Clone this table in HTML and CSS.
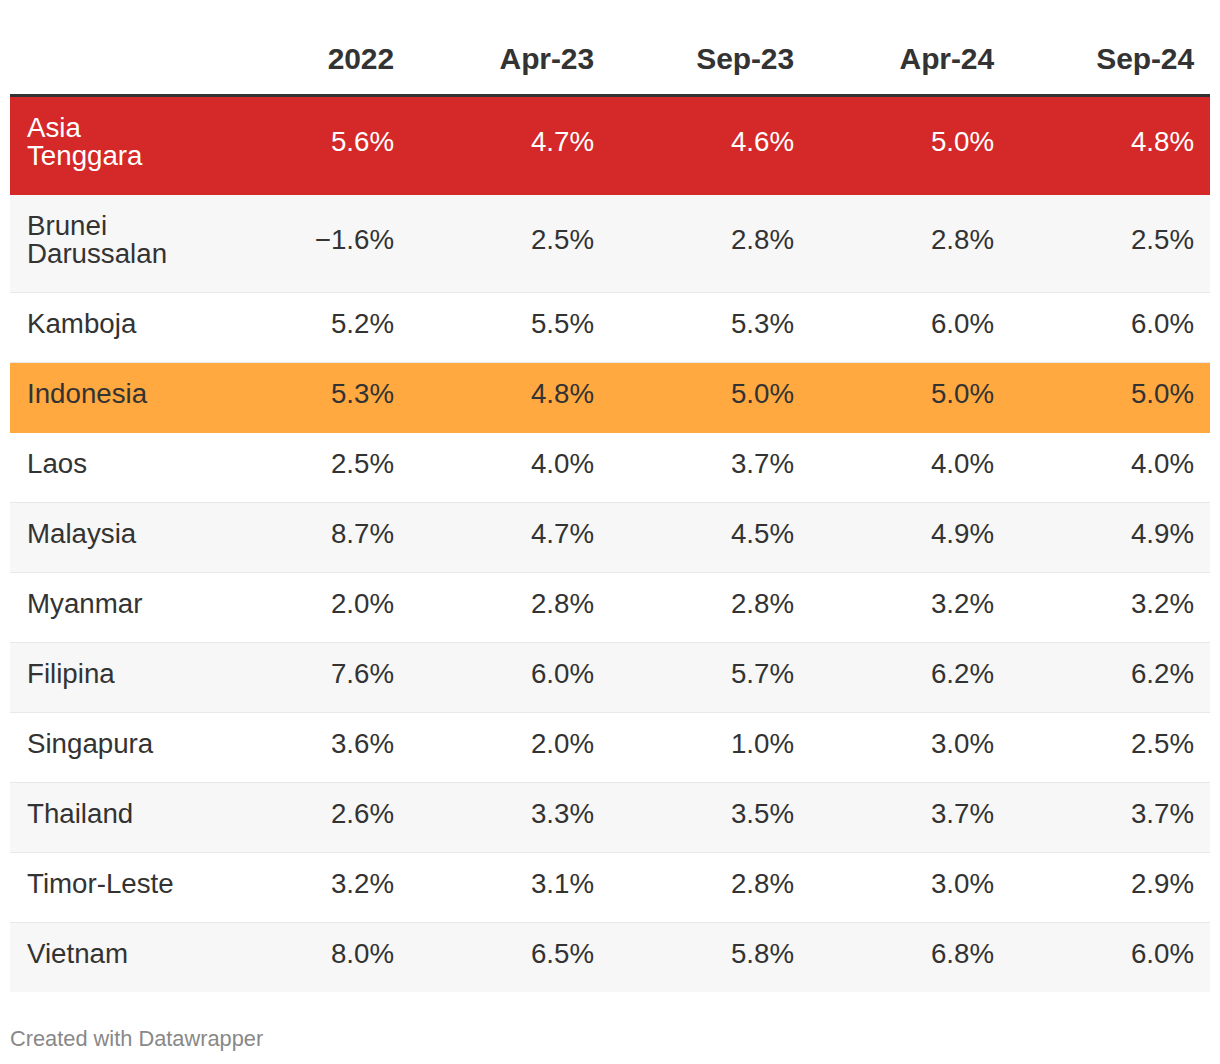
FILE: index.html
```html
<!DOCTYPE html>
<html lang="id">
<head>
<meta charset="utf-8">
<title>Pertumbuhan Ekonomi Asia Tenggara</title>
<link rel="stylesheet" href="styles.css">
</head>
<body>
<div class="chart">
  <table class="dw-table">
    <colgroup>
      <col class="col-name">
      <col class="col-num">
      <col class="col-num">
      <col class="col-num">
      <col class="col-num">
      <col class="col-num">
    </colgroup>
    <thead>
      <tr>
        <th class="name"></th>
        <th>2022</th>
        <th>Apr-23</th>
        <th>Sep-23</th>
        <th>Apr-24</th>
        <th>Sep-24</th>
      </tr>
    </thead>
    <tbody>
      <tr class="hl-red">
        <td class="name">Asia<br>Tenggara</td>
        <td>5.6%</td><td>4.7%</td><td>4.6%</td><td>5.0%</td><td>4.8%</td>
      </tr>
      <tr class="stripe">
        <td class="name">Brunei<br>Darussalan</td>
        <td>&minus;1.6%</td><td>2.5%</td><td>2.8%</td><td>2.8%</td><td>2.5%</td>
      </tr>
      <tr>
        <td class="name">Kamboja</td>
        <td>5.2%</td><td>5.5%</td><td>5.3%</td><td>6.0%</td><td>6.0%</td>
      </tr>
      <tr class="hl-orange">
        <td class="name">Indonesia</td>
        <td>5.3%</td><td>4.8%</td><td>5.0%</td><td>5.0%</td><td>5.0%</td>
      </tr>
      <tr>
        <td class="name">Laos</td>
        <td>2.5%</td><td>4.0%</td><td>3.7%</td><td>4.0%</td><td>4.0%</td>
      </tr>
      <tr class="stripe">
        <td class="name">Malaysia</td>
        <td>8.7%</td><td>4.7%</td><td>4.5%</td><td>4.9%</td><td>4.9%</td>
      </tr>
      <tr>
        <td class="name">Myanmar</td>
        <td>2.0%</td><td>2.8%</td><td>2.8%</td><td>3.2%</td><td>3.2%</td>
      </tr>
      <tr class="stripe">
        <td class="name">Filipina</td>
        <td>7.6%</td><td>6.0%</td><td>5.7%</td><td>6.2%</td><td>6.2%</td>
      </tr>
      <tr>
        <td class="name">Singapura</td>
        <td>3.6%</td><td>2.0%</td><td>1.0%</td><td>3.0%</td><td>2.5%</td>
      </tr>
      <tr class="stripe">
        <td class="name">Thailand</td>
        <td>2.6%</td><td>3.3%</td><td>3.5%</td><td>3.7%</td><td>3.7%</td>
      </tr>
      <tr>
        <td class="name">Timor-Leste</td>
        <td>3.2%</td><td>3.1%</td><td>2.8%</td><td>3.0%</td><td>2.9%</td>
      </tr>
      <tr class="stripe last">
        <td class="name">Vietnam</td>
        <td>8.0%</td><td>6.5%</td><td>5.8%</td><td>6.8%</td><td>6.0%</td>
      </tr>
    </tbody>
  </table>
  <div class="footer">Created with Datawrapper</div>
</div>
</body>
</html>
```

FILE: styles.css
```css
html, body {
  margin: 0;
  padding: 0;
  background: #ffffff;
}

.chart {
  padding: 29px 10px 0 10px;
  font-family: "Liberation Sans", Arial, Helvetica, sans-serif;
  color: #333333;
}

.dw-table {
  width: 1200px;
  table-layout: fixed;
  border-collapse: collapse;
  border-spacing: 0;
  font-size: 27.7px;
  line-height: 28px;
}

.col-name,
.col-num {
  width: 200px;
}

.dw-table th,
.dw-table td {
  padding: 17px 16px 24px 16px;
  text-align: right;
  vertical-align: middle;
  white-space: nowrap;
}

.dw-table th {
  font-weight: bold;
  font-size: 30px;
  padding-top: 16px;
  padding-bottom: 21px;
  border-bottom: 3px solid #333333;
  letter-spacing: -0.1px;
}

.dw-table .name {
  text-align: left;
  padding-left: 17px;
}

.dw-table tbody tr {
  border-bottom: 1px solid #e8e8e8;
}

.dw-table tbody tr.last {
  border-bottom: none;
}

.stripe {
  background: #f7f7f7;
}

.hl-red {
  background: #d52828;
  color: #ffffff;
}

.dw-table tbody tr.hl-red {
  border-bottom-color: #d52828;
}

.hl-orange {
  background: #ffa940;
  color: #333333;
}

.dw-table tbody tr.hl-orange {
  border-bottom-color: #ffa940;
}

.footer {
  margin-top: 34px;
  font-size: 21.8px;
  line-height: 26px;
  color: #888888;
}
```
